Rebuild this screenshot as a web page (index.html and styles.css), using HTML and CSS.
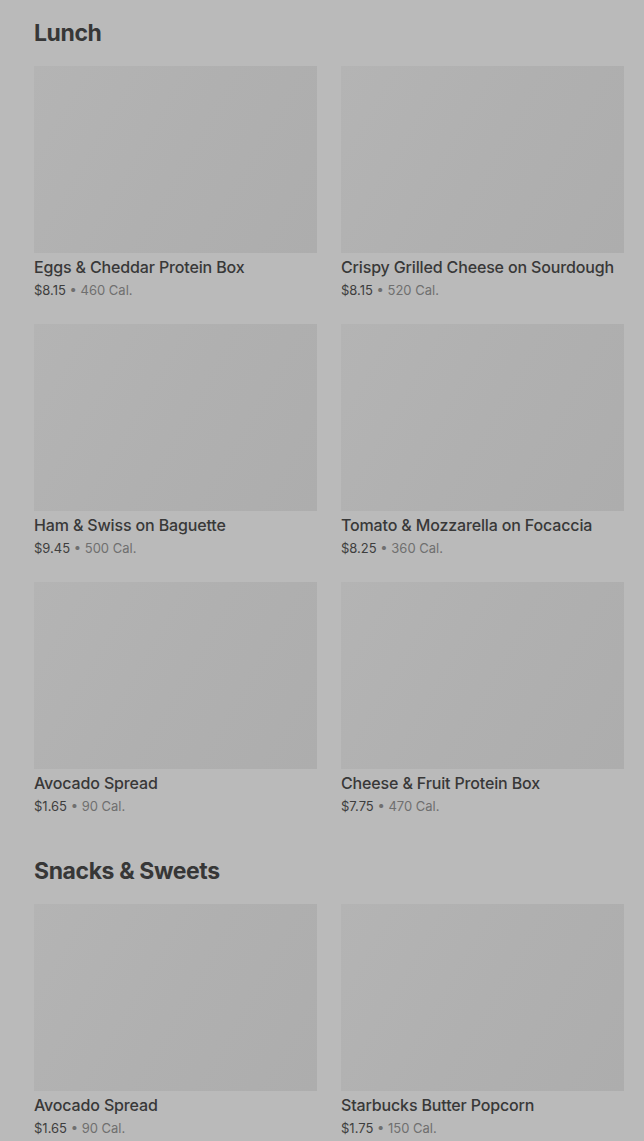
FILE: index.html
```html
<!DOCTYPE html>
<html>
<head>
<meta charset="utf-8">
<link rel="stylesheet" href="styles.css">
</head>
<body>
<main class="menu">
  <section class="section">
    <h2 class="section-title">Lunch</h2>
    <div class="grid">
      <div class="item"><div class="thumb"></div><div class="name">Eggs &amp; Cheddar Protein Box</div><div class="meta"><span class="price">$8.15</span> • 460 Cal.</div></div>
      <div class="item"><div class="thumb"></div><div class="name">Crispy Grilled Cheese on Sourdough</div><div class="meta"><span class="price">$8.15</span> • 520 Cal.</div></div>
      <div class="item"><div class="thumb"></div><div class="name">Ham &amp; Swiss on Baguette</div><div class="meta"><span class="price">$9.45</span> • 500 Cal.</div></div>
      <div class="item"><div class="thumb"></div><div class="name">Tomato &amp; Mozzarella on Focaccia</div><div class="meta"><span class="price">$8.25</span> • 360 Cal.</div></div>
      <div class="item"><div class="thumb"></div><div class="name">Avocado Spread</div><div class="meta"><span class="price">$1.65</span> • 90 Cal.</div></div>
      <div class="item"><div class="thumb"></div><div class="name">Cheese &amp; Fruit Protein Box</div><div class="meta"><span class="price">$7.75</span> • 470 Cal.</div></div>
    </div>
  </section>
  <section class="section">
    <h2 class="section-title">Snacks &amp; Sweets</h2>
    <div class="grid">
      <div class="item"><div class="thumb"></div><div class="name">Avocado Spread</div><div class="meta"><span class="price">$1.65</span> • 90 Cal.</div></div>
      <div class="item"><div class="thumb"></div><div class="name">Starbucks Butter Popcorn</div><div class="meta"><span class="price">$1.75</span> • 150 Cal.</div></div>
    </div>
  </section>
</main>
</body>
</html>
```

FILE: styles.css
```css
html, body {
  margin: 0;
  padding: 0;
  background: #bababa;
}
body {
  font-family: Inter, "Noto Sans", Roboto, sans-serif;
  overflow: hidden;
  height: 1141px;
}
.menu {
  padding: 18px 20px 0 34px;
  display: flex;
  flex-direction: column;
  gap: 39px;
}
.section-title {
  margin: 0 0 18px 0;
  font-size: 23px;
  line-height: 30px;
  font-weight: 700;
  letter-spacing: -0.4px;
  color: #373737;
}
.grid {
  display: grid;
  grid-template-columns: 283px 283px;
  column-gap: 24px;
  row-gap: 23px;
}
.item {
  display: flex;
  flex-direction: column;
}
.thumb {
  height: 187px;
  background: linear-gradient(120deg, #b4b4b4 0%, #b0b0b0 50%, #adadad 100%);
}
.name {
  margin-top: 3px;
  font-size: 16px;
  line-height: 23px;
  font-weight: 500;
  color: #383838;
  letter-spacing: -0.15px;
  white-space: nowrap;
}
.meta {
  font-size: 13px;
  line-height: 22px;
  color: #6f6f6f;
}
.price {
  color: #3e3e3e;
}
```
